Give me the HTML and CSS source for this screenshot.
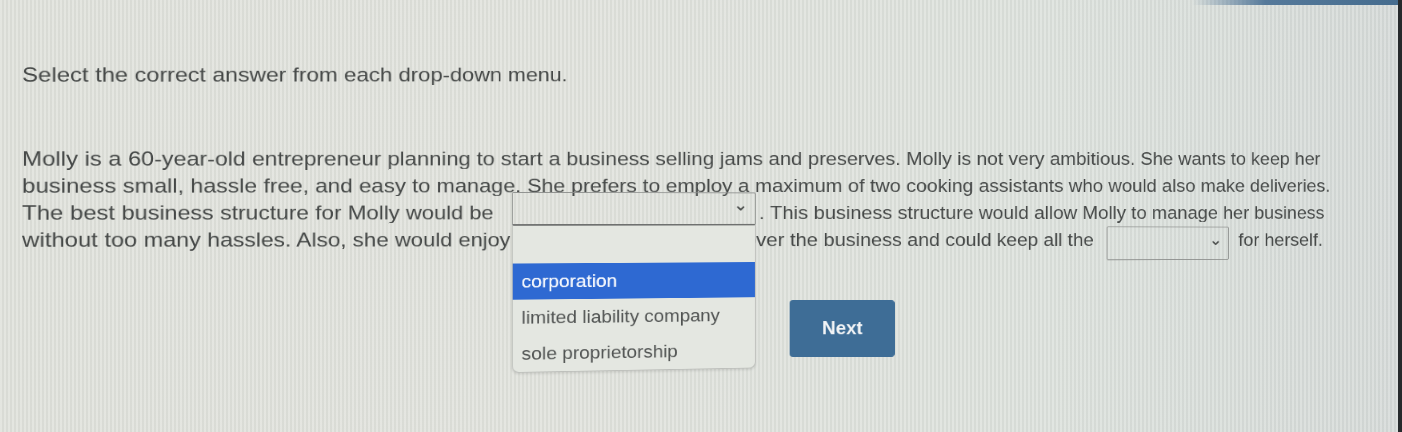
FILE: index.html
```html
<!DOCTYPE html>
<html lang="en">
<head>
<meta charset="utf-8">
<title>Drop-down question</title>
<link rel="stylesheet" href="styles.css">
</head>
<body>
<div class="screen">
  <div class="topbar"><div class="topbar-accent"></div></div>
  <main class="content">
    <p class="prompt view">Select the correct answer from each drop-down menu.</p>
    <div class="passage">
      <span class="line view">Molly is a 60-year-old entrepreneur planning to start a business selling jams and preserves. Molly is not very ambitious. She wants to keep her</span>
      <span class="line view">business small, hassle free, and easy to manage. She prefers to employ a maximum of two cooking assistants who would also make deliveries.</span>
      <span class="line view has-menu">The best business structure for Molly would be <span class="select-wrap"><span class="select s1"><svg class="chev" viewBox="0 0 10 6" width="10" height="6"><polyline points="1,1 5,5 9,1"/></svg></span><span class="listbox">
          <span class="option blank"></span>
          <span class="option active">corporation</span>
          <span class="option">limited liability company</span>
          <span class="option">sole proprietorship</span>
        </span></span>. This business structure would allow Molly to manage her business</span>
      <span class="line view">without too many hassles. Also, she would enjoy <span class="select s2"></span> over the business and could keep all the <span class="select s3"><svg class="chev" viewBox="0 0 10 6" width="10" height="6"><polyline points="1,1 5,5 9,1"/></svg></span> for herself.</span>
    </div>
    <div class="actions view">
      <button class="next" type="button">Next</button>
    </div>
  </main>
  <div class="bezel"></div>
</div>
</body>
</html>
```

FILE: styles.css
```css
html, body {
  margin: 0;
  padding: 0;
  height: 100%;
}

body {
  background: #dfe1dc;
  font-family: "Liberation Sans", Arial, sans-serif;
  color: #454847;
  overflow: hidden;
}

.screen {
  position: relative;
  height: 432px;
  overflow: hidden;
  background-color: #dfe2dc;
  background-image:
    repeating-linear-gradient(90deg, rgba(255,255,255,0.12) 0 2px, rgba(0,0,0,0.03) 2px 4px),
    linear-gradient(90deg, #e0e2dc 0%, #e1e3dd 40%, #dde2dd 75%, #d6dbd9 100%);
}

.topbar {
  height: 5px;
  display: flex;
  justify-content: flex-end;
}

.topbar-accent {
  width: 210px;
  height: 5px;
  background: linear-gradient(90deg, rgba(74,112,144,0) 0%, #55799a 35%, #456c8e 100%);
}

.content {
  display: flow-root;
  padding: 0 0 0 22px;
}

/* camera view of the monitor: the right side of the screen is farther away */
.view {
  transform-origin: 0 50%;
  transform: perspective(1590px) rotateY(10deg) scaleY(0.85);
}

.prompt {
  margin: 56px 0 0 0;
  font-size: 24.5px;
  line-height: 27px;
  white-space: nowrap;
}

.passage {
  margin-top: 57px;
  font-size: 24.5px;
  line-height: 27px;
  white-space: nowrap;
}

.line {
  display: block;
}

.line.has-menu {
  position: relative;
  z-index: 2;
}

.select-wrap {
  position: relative;
  display: inline-block;
  vertical-align: top;
  margin: -12px 4px -3px 14px;
}

.select {
  position: relative;
  display: inline-block;
  box-sizing: border-box;
  border: 1px solid #8a8c8a;
  border-radius: 2px;
  background: transparent;
}

.select.s1 {
  display: block;
  width: 285px;
  height: 41.5px;
  border-bottom: 2px solid #6f7170;
}

/* third menu, hidden under the open list */
.select.s2 {
  vertical-align: middle;
  width: 258px;
  height: 24px;
  margin: 0 2px 0 0;
  border-color: transparent;
}

.select.s3 {
  vertical-align: top;
  width: 163px;
  height: 44.5px;
  margin: -4px 6px -14px 10px;
}

.chev {
  position: absolute;
  right: 12px;
  top: 50%;
  margin-top: -3px;
  fill: none;
  stroke: #4a4d4c;
  stroke-width: 2;
}

.listbox {
  position: absolute;
  left: 0;
  top: 100%;
  width: 285px;
  box-sizing: border-box;
  display: flex;
  flex-direction: column;
  background: #e4e7e1;
  border: 1px solid #bdbfbb;
  border-top: none;
  border-radius: 0 0 8px 8px;
  box-shadow: 0 2px 3px rgba(0,0,0,0.10);
  font-size: 22px;
  line-height: 45px;
  color: #505352;
  z-index: 2;
}

.option {
  display: block;
  height: 45px;
  padding: 0 10px;
}

.option.blank {
  height: 47px;
}

.option.active {
  background: #2e69d2;
  color: #f4f7fc;
  text-shadow: 0 0 0.6px #ffffff;
}

.actions {
  display: flex;
  margin-top: 38px;
  padding-left: 852px;
}

.next {
  width: 129px;
  height: 73px;
  border: none;
  border-radius: 4px;
  background: #3e6d96;
  color: #f2f4f6;
  font-family: "Liberation Sans", Arial, sans-serif;
  font-size: 23px;
  font-weight: bold;
}

.bezel {
  position: absolute;
  top: 0;
  right: 0;
  width: 4px;
  height: 432px;
  background: #262a2c;
}
```
